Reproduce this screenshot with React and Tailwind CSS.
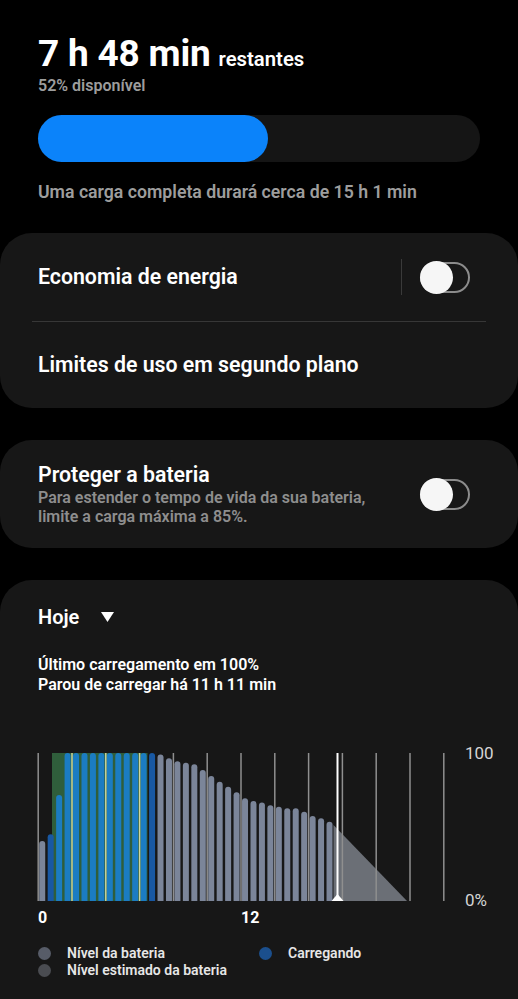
import React from 'react'

const BARS = [
  // [top y in page px, kind]  kind: g = level, b = charging, d = charging edge
  [841, 'g'], [834.3, 'd'], [795, 'b'],
  [753, 'b'], [753, 'b'], [753, 'b'], [753, 'b'], [753, 'b'],
  [753, 'b'], [753, 'b'], [753, 'b'], [753, 'b'], [753, 'b'],
  [753, 'd'],
  [754.5, 'g'], [758.3, 'g'], [761.3, 'g'], [762.7, 'g'], [764.3, 'g'],
  [770, 'g'], [776, 'g'], [781.7, 'g'], [786.7, 'g'], [792.3, 'g'],
  [798.3, 'g'], [801, 'g'], [802.5, 'g'], [805.3, 'g'], [806.7, 'g'],
  [808.3, 'g'], [808.3, 'g'], [811.7, 'g'], [816, 'g'], [818.3, 'g'],
  [821.7, 'g'],
]

const BAR_FILL = { g: '#7b8599', b: '#1b7cc2', d: '#1858a3' }

const PITCH = 8.45
const GRID = 33.8
const BASE = 149 // svg y of baseline (page 901)
const TOP = 752 // page y of svg top

function Toggle() {
  return (
    <div className="relative w-[50px] h-[31px] rounded-full border-2 border-[#8c8c8c] shrink-0">
      <div className="absolute -left-[2px] -top-[3px] w-[33px] h-[33px] rounded-full bg-[#f6f6f6]" />
    </div>
  )
}

function Chart() {
  return (
    <div className="relative h-[150px] -ml-[1px]">
      <svg width="410" height="150" viewBox="0 0 410 150" className="block">
        {/* charging background */}
        <rect x="15" y="1" width="95.5" height="148" fill="#2f5e3b" />

        {/* estimated level */}
        <polygon points="296.5,73 370,149 296.5,149" fill="#6b6f76" />

        {BARS.map(([top, kind], i) => {
          const cx = 1 + PITCH * (i + 0.5)
          const y = top - TOP
          return (
            <rect
              key={i}
              x={cx - 3}
              y={y}
              width="6"
              height={BASE - y + 3}
              rx="3"
              fill={BAR_FILL[kind]}
            />
          )
        })}
        {/* cover the rounded bottoms */}
        <rect x="0" y={BASE} width="410" height="4" fill="#171717" />

        {/* grid lines */}
        {Array.from({ length: 13 }).map((_, k) => {
          const x = 1.2 + GRID * k
          const inGreen = x > 15 && x < 111
          return (
            <line
              key={k}
              x1={x}
              x2={x}
              y1="1"
              y2={BASE}
              stroke={inGreen ? '#cbd79e' : '#8f8f8f'}
              strokeWidth="1.5"
            />
          )
        })}

        {/* now marker */}
        <line x1="300.5" x2="300.5" y1="1" y2={BASE} stroke="#ffffff" strokeWidth="2" />
        <polygon points="294.5,149 306.5,149 300.5,142" fill="#ffffff" />
      </svg>

      <span className="absolute left-[428px] -top-[9px] text-[17px] leading-[20px] text-[#d4d4d4]">100</span>
      <span className="absolute left-[428px] top-[138px] text-[17px] leading-[20px] text-[#d4d4d4]">0%</span>
    </div>
  )
}

export default function App() {
  return (
    <div
      className="w-[518px] h-[999px] overflow-hidden bg-black text-white"
      style={{ fontFamily: 'Roboto, "Noto Sans", sans-serif' }}
    >
      {/* Summary */}
      <div className="px-[38px] pt-[32px]">
        <div className="flex items-baseline h-[44px]">
          <span className="text-[37px] leading-[44px] font-bold tracking-[-0.2px]">7 h 48 min</span>
          <span className="ml-[8px] text-[20.3px] font-semibold">restantes</span>
        </div>
        <div className="text-[16px] leading-[20px] font-semibold text-[#9d9d9d]">52% disponível</div>

        <div className="mt-[19px] h-[47px] rounded-full bg-[#151515]">
          <div className="h-full w-[230px] rounded-full bg-[#0b83fa]" />
        </div>

        <div className="mt-[18px] text-[17.7px] leading-[24px] font-semibold text-[#9d9d9d]">
          Uma carga completa durará cerca de 15 h 1 min
        </div>
      </div>

      {/* Power saving */}
      <div className="mt-[29px] rounded-[32px] bg-[#171717]">
        <div className="flex items-center h-[88px] pl-[38px] pr-[48px]">
          <span className="flex-1 text-[21.3px] font-semibold">Economia de energia</span>
          <div className="w-px h-[36px] bg-[#3a3a3a] mr-[18px]" />
          <Toggle />
        </div>
        <div className="mx-[32px] h-px bg-[#373737]" />
        <div className="flex items-center h-[86px] px-[38px]">
          <span className="text-[21.3px] font-semibold">Limites de uso em segundo plano</span>
        </div>
      </div>

      {/* Protect battery */}
      <div className="mt-[32px] rounded-[32px] bg-[#171717] flex items-center pl-[38px] pr-[48px] py-[22px]">
        <div className="flex-1">
          <div className="text-[21.3px] leading-[26px] font-semibold">Proteger a bateria</div>
          <div className="text-[16px] leading-[19px] font-semibold text-[#8e8e8e]">
            Para estender o tempo de vida da sua bateria,
            <br />
            limite a carga máxima a 85%.
          </div>
        </div>
        <Toggle />
      </div>

      {/* Usage */}
      <div className="mt-[32px] rounded-t-[32px] bg-[#171717] pl-[38px] pt-[23px] h-[460px]">
        <div className="flex items-center h-[28px]">
          <span className="text-[20px] font-semibold">Hoje</span>
          <svg width="13" height="10" viewBox="0 0 13 10" className="ml-[22px]">
            <polygon points="0,0 13,0 6.5,10" fill="#ffffff" />
          </svg>
        </div>

        <div className="mt-[24px] text-[16px] leading-[19.5px] font-semibold">
          <div>Último carregamento em 100%</div>
          <div>Parou de carregar há 11 h 11 min</div>
        </div>

        <div className="mt-[58px]">
          <Chart />
        </div>

        <div className="flex mt-[6px] text-[16px] leading-[20px] font-bold">
          <span className="w-[203px]">0</span>
          <span>12</span>
        </div>

        <div className="mt-[17px] flex text-[14px] leading-[17px] font-semibold text-[#e6e6e6]">
          <div className="w-[221px]">
            <div className="flex items-center">
              <span className="w-[13px] h-[13px] rounded-full bg-[#575c68] mr-[16px]" />
              Nível da bateria
            </div>
            <div className="flex items-center">
              <span className="w-[13px] h-[13px] rounded-full bg-[#4a4c51] mr-[16px]" />
              Nível estimado da bateria
            </div>
          </div>
          <div className="flex items-start">
            <div className="flex items-center">
              <span className="w-[13px] h-[13px] rounded-full bg-[#1b4f8d] mr-[16px]" />
              Carregando
            </div>
          </div>
        </div>
      </div>
    </div>
  )
}
